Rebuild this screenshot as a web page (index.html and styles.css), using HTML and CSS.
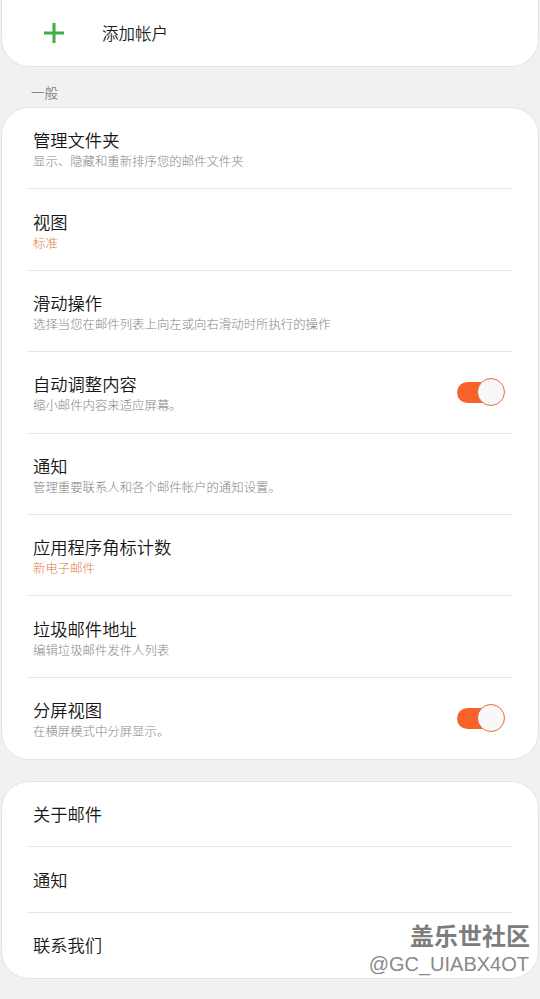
FILE: index.html
```html
<!DOCTYPE html>
<html lang="zh-CN">
<head>
<meta charset="utf-8">
<title>邮件设置</title>
<link rel="stylesheet" href="styles.css">
</head>
<body>
<div class="screen">
  <div class="card card-top">
    <div class="add-row">
      <svg class="plus" width="22" height="22" viewBox="0 0 22 22"><path d="M11 1v20M1 11h20" stroke="#3fae49" stroke-width="3" fill="none"/></svg>
      <span class="add-text">添加帐户</span>
    </div>
  </div>

  <div class="section-label">一般</div>

  <div class="card">
    <div class="row">
      <div class="row-text"><div class="title">管理文件夹</div><div class="sub">显示、隐藏和重新排序您的邮件文件夹</div></div>
    </div>
    <div class="row">
      <div class="row-text"><div class="title">视图</div><div class="sub accent">标准</div></div>
    </div>
    <div class="row">
      <div class="row-text"><div class="title">滑动操作</div><div class="sub">选择当您在邮件列表上向左或向右滑动时所执行的操作</div></div>
    </div>
    <div class="row">
      <div class="row-text"><div class="title">自动调整内容</div><div class="sub">缩小邮件内容来适应屏幕。</div></div>
      <div class="toggle"><span class="knob"></span></div>
    </div>
    <div class="row">
      <div class="row-text"><div class="title">通知</div><div class="sub">管理重要联系人和各个邮件帐户的通知设置。</div></div>
    </div>
    <div class="row">
      <div class="row-text"><div class="title">应用程序角标计数</div><div class="sub accent">新电子邮件</div></div>
    </div>
    <div class="row">
      <div class="row-text"><div class="title">垃圾邮件地址</div><div class="sub">编辑垃圾邮件发件人列表</div></div>
    </div>
    <div class="row">
      <div class="row-text"><div class="title">分屏视图</div><div class="sub">在横屏模式中分屏显示。</div></div>
      <div class="toggle"><span class="knob"></span></div>
    </div>
  </div>

  <div class="card card-bottom">
    <div class="row short"><div class="title">关于邮件</div></div>
    <div class="row short"><div class="title">通知</div></div>
    <div class="row short"><div class="title">联系我们</div></div>
  </div>

  <div class="watermark">
    <div class="wm-main">盖乐世社区</div>
    <div class="wm-id">@GC_UIABX4OT</div>
  </div>
</div>
</body>
</html>
```

FILE: styles.css
```css
html, body {
  margin: 0;
  padding: 0;
  background: #f1f1f1;
}

.screen {
  position: relative;
  width: 540px;
  height: 999px;
  overflow: hidden;
  font-family: "Noto Sans CJK SC", "Noto Sans", sans-serif;
  font-weight: 350;
  color: #1c1c1c;
}

.card {
  background: #fff;
  margin: 0 1px;
  border: 1px solid #e4e4e4;
  border-radius: 28px;
}

.card-top {
  border-top: none;
  border-radius: 0 0 28px 28px;
  height: 66px;
}

.add-row {
  display: flex;
  align-items: center;
  height: 66px;
  padding-left: 41px;
}

.plus {
  display: block;
  margin-top: -1px;
}

.add-text {
  margin-left: 37px;
  font-size: 16.5px;
  color: #1e1e1e;
}

.section-label {
  height: 40px;
  line-height: 20px;
  padding: 15px 0 0 31px;
  box-sizing: border-box;
  font-size: 13.5px;
  color: #858585;
}

.row {
  display: flex;
  align-items: center;
  height: 81.4px;
  margin: 0 25px;
  padding: 0 6px;
  box-sizing: border-box;
  border-bottom: 1px solid #e6e6e6;
}

.row:last-child {
  border-bottom: none;
}

.row-text {
  flex: 1;
  margin-top: 3px;
}

.title {
  font-size: 17.3px;
  line-height: 22px;
  color: #161616;
}

.sub {
  font-size: 12.4px;
  line-height: 17px;
  margin-top: 2px;
  font-weight: 300;
  color: #858585;
}

.sub.accent {
  color: #e07d40;
}

.toggle {
  position: relative;
  width: 47px;
  height: 21px;
  border-radius: 11px;
  background: #f7622a;
  margin-right: 3px;
}

.knob {
  position: absolute;
  right: -1px;
  top: -4px;
  width: 26px;
  height: 26px;
  border-radius: 50%;
  background: #f8f8f8;
  border: 1.5px solid #e2703c;
}

.card-bottom {
  margin-top: 21px;
}

.row.short {
  height: 65.3px;
}

.watermark {
  position: absolute;
  right: 10px;
  top: 918px;
  text-align: right;
}

.wm-main {
  font-size: 24px;
  line-height: 34px;
  font-weight: 700;
  color: #7d7d7d;
}

.wm-id {
  font-family: "Liberation Sans", Arial, sans-serif;
  font-size: 20px;
  line-height: 24px;
  color: #8a8a8a;
  margin-right: 1px;
}
```
